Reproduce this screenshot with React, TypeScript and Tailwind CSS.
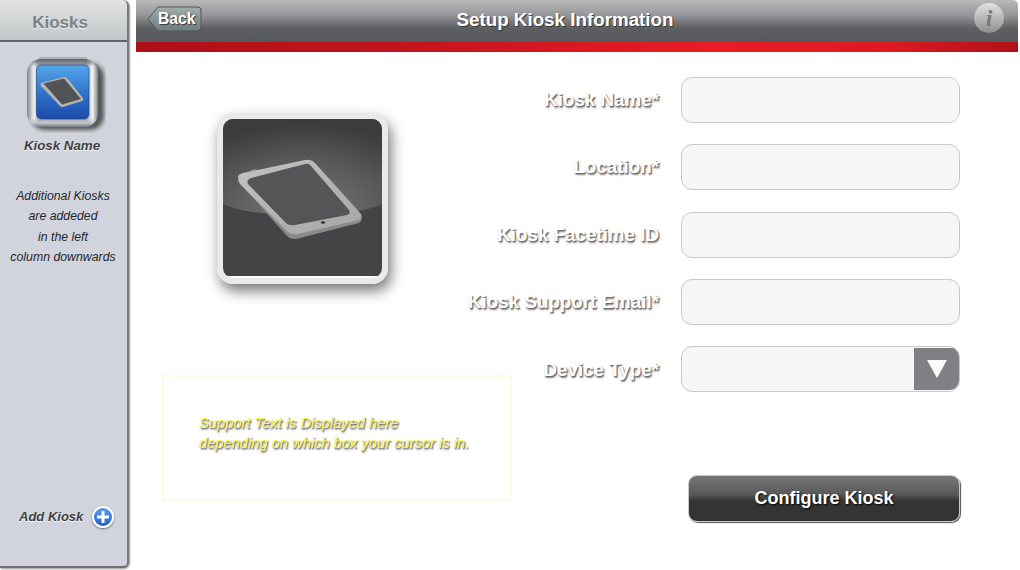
const labelShadow = "text-white [text-shadow:1px_1px_1px_#666,1px_2px_2px_#888]";

function SmallKioskIcon() {
  return (
    <svg width="80" height="76" viewBox="0 0 80 76" className="block">
      <defs>
        <linearGradient id="fr" x1="0" x2="1" y1="0" y2="0">
          <stop offset="0" stopColor="#7d8388" />
          <stop offset="0.1" stopColor="#f2f4f5" />
          <stop offset="0.16" stopColor="#9aa0a5" />
          <stop offset="0.84" stopColor="#9aa0a5" />
          <stop offset="0.92" stopColor="#f6f7f8" />
          <stop offset="1" stopColor="#7d8388" />
        </linearGradient>
        <linearGradient id="frv" x1="0" x2="0" y1="0" y2="1">
          <stop offset="0" stopColor="#5d6368" />
          <stop offset="0.12" stopColor="#868c91" stopOpacity="0" />
          <stop offset="0.86" stopColor="#c4c8cb" stopOpacity="0" />
          <stop offset="0.94" stopColor="#c4c8cb" />
          <stop offset="1" stopColor="#70767b" />
        </linearGradient>
        <linearGradient id="bl" x1="0" x2="0" y1="0" y2="1">
          <stop offset="0" stopColor="#55a6ea" />
          <stop offset="0.5" stopColor="#3176cc" />
          <stop offset="1" stopColor="#1c4aa8" />
        </linearGradient>
        <filter id="sh" x="-20%" y="-20%" width="140%" height="140%">
          <feGaussianBlur stdDeviation="2" />
        </filter>
      </defs>
      <rect x="5" y="6" width="73" height="67" rx="14" fill="#222" opacity="0.7" filter="url(#sh)" />
      <rect x="13" y="0" width="48" height="3" fill="#aeb1b6" />
      <rect x="1" y="2" width="71" height="68" rx="14" fill="url(#fr)" />
      <rect x="1" y="2" width="71" height="68" rx="14" fill="url(#frv)" />
      <rect x="10.500" y="8" width="52.500" height="54" rx="5" fill="url(#bl)" stroke="#1b3f8f" strokeWidth="0.6" />
      <path d="M15 26 L38 20 Q40 19.500 41 21 L57 41 Q58 43 56 44 L37 50 Q35 50.500 34 49 L15 29 Q14 27 15 26 Z" fill="#b5b5b0" />
      <path d="M17.500 26.500 L38 21.500 L55 42 L36 47.500 Z" fill="#515256" />
    </svg>
  );
}

function LargeKioskIcon() {
  return (
    <svg width="159" height="157" viewBox="0 0 159 157" className="block">
      <defs>
        <radialGradient id="gl" cx="0.5" cy="0.95" r="0.9">
          <stop offset="0" stopColor="#7a7a7a" />
          <stop offset="0.6" stopColor="#585858" />
          <stop offset="1" stopColor="#3c3c3c" />
        </radialGradient>
        <linearGradient id="td" x1="0" x2="1" y1="0" y2="1">
          <stop offset="0" stopColor="#c2c2c2" />
          <stop offset="1" stopColor="#a6a6a6" />
        </linearGradient>
      </defs>
      <rect width="159" height="157" fill="#444345" />
      <path d="M0 0 H159 V85 C130 100 30 100 0 85 Z" fill="url(#gl)" />
      <path d="M15 62 L65 118 Q69 121 75 119.500 L136 104 Q140 102 138 97 L90 60 L30 50 Z" fill="#8a8a8a" />
      <path d="M15 58 Q15 55 20 54 L82 41 Q88 40 92 44 L138 95 Q140 99 136 101 L75 115 Q69 116 65 113 L17 65 Q15 62 15 58 Z" fill="url(#td)" />
      <path d="M28 59 L82 45 Q86 44 88 47 L126 91 Q128 95 124 96 L72 106 Q66 107 63 104 L25 65 Q23 61 28 59 Z" fill="#555557" />
      <ellipse cx="100" cy="103.500" rx="2" ry="1.300" fill="#2c2c2c" />
    </svg>
  );
}

function Field({ label, select }: { label: string; select?: boolean }) {
  return (
    <div className="flex items-center h-[46px]">
      <div className={`w-[237px] text-right text-[18.800px] leading-[22px] font-bold ${select ? "translate-y-[1px]" : ""} ${labelShadow}`}>{label}</div>
      <div className="ml-[22px] w-[279px] h-[46px] rounded-[11px] border border-[#c9c9c9] bg-[#f6f6f6] flex justify-end overflow-hidden">
        {select && (
          <div className="w-[45px] h-[42px] mt-[1px] bg-[#7f8083] rounded-br-[9px] flex items-center justify-center">
            <svg width="22" height="20" viewBox="0 0 22 20"><path d="M1 1 H21 L11 19 Z" fill="#fafafa" /></svg>
          </div>
        )}
      </div>
    </div>
  );
}

export default function App() {
  return (
    <div className="flex w-[1020px] h-[570px] bg-white overflow-hidden font-['Liberation_Sans',Arial,sans-serif]">
      <aside className="w-[129px] h-[568px] shrink-0 flex flex-col bg-[#d1d4dc] rounded-r-[6px] border-r-2 border-b-2 border-r-[#77797d] border-b-[#6e7074] shadow-[1px_1px_2px_#999]">
        <div className="h-[42px] shrink-0 flex items-center justify-center border-b-2 border-[#62666a] rounded-tr-[6px] pt-[5px] pr-[7px] bg-[linear-gradient(#e1e3e3,#c3c7c9)]">
          <span className="text-[17px] font-bold text-[#7a7f89] [text-shadow:0_1px_0_#eee]">Kiosks</span>
        </div>
        <div className="pl-[26px] pt-[15px]">
          <SmallKioskIcon />
        </div>
        <div className="mt-[5px] pr-[3px] text-center text-[13.300px] leading-[16px] font-bold italic text-[#3f3f42] [text-shadow:0_1px_1px_#fff]">Kiosk Name</div>
        <div className="mt-[32px] pr-[1px] text-center text-[12.300px] leading-[20.300px] italic text-[#26272a]">
          <div>Additional Kiosks</div>
          <div>are addeded</div>
          <div>in the left</div>
          <div>column downwards</div>
        </div>
        <div className="mt-auto mb-[38px] pl-[19px] flex items-center gap-[9px]">
          <span className="text-[13px] font-bold italic text-[#3f3f42] [text-shadow:0_1px_1px_#fff]">Add Kiosk</span>
          <span className="w-[22px] h-[22px] rounded-full border-2 border-white bg-[linear-gradient(#5a9cf0,#1f5fc8)] shadow-[0_1px_2px_#666] flex items-center justify-center">
            <svg width="14" height="14" viewBox="0 0 14 14"><path d="M5.500 1 H8.500 V5.500 H13 V8.500 H8.500 V13 H5.500 V8.500 H1 V5.500 H5.500 Z" fill="#fff" /></svg>
          </span>
        </div>
      </aside>

      <main className="ml-[7px] w-[882px] flex flex-col">
        <header className="h-[42px] shrink-0 flex items-center justify-between rounded-tr-[5px] bg-[linear-gradient(#b9b9ba_0%,#96979a_35%,#5d5e62_68%,#58595c_100%)] pl-[11px] pr-[14px]">
          <div className="flex items-center mb-[5px]">
            <svg width="55" height="26" viewBox="0 0 55 26" className="block">
              <defs>
                <linearGradient id="bk" x1="0" x2="0" y1="0" y2="1">
                  <stop offset="0" stopColor="#a2aeae" />
                  <stop offset="1" stopColor="#6f7c7c" />
                </linearGradient>
              </defs>
              <path d="M1 13 L11 1 H51 Q54 1 54 4 V22 Q54 25 51 25 H11 Z" fill="url(#bk)" stroke="#4f5656" strokeWidth="1" />
            </svg>
            <span className="-ml-[44px] w-[40px] text-[15.700px] leading-[20px] font-bold text-white [text-shadow:1px_1px_1px_#333]">Back</span>
          </div>
          <h1 className="absolute left-[136px] w-[858px] text-center text-[18.800px] leading-[22px] font-bold text-white mb-[2px] [text-shadow:1px_1px_1px_#333] pointer-events-none">Setup Kiosk Information</h1>
          <div className="w-[30px] h-[30px] mb-[6px] rounded-full bg-[linear-gradient(#e2e2e2,#8e8e8e)] flex items-center justify-center">
            <span className="font-['Liberation_Serif',serif] text-[24px] leading-none font-bold italic text-[#77787b]">i</span>
          </div>
        </header>
        <div className="h-[10px] shrink-0 bg-[linear-gradient(90deg,#ad0f17_0%,#c3141c_30%,#e91c25_65%,#de1a22_85%,#b01017_100%)]" />

        <div className="flex-1 flex">
          <div className="w-[396px] shrink-0 pl-[26px]">
            <div className="ml-[55px] mt-[61px] w-[171px] h-[171px] rounded-[16px] border-[6px] border-[#e9e9e9] shadow-[3px_7px_14px_#777] overflow-hidden">
              <LargeKioskIcon />
            </div>
            <div className="mt-[91px] h-[126px] w-[350px] border-2 border-[#fbfbe2] pl-[35px] pt-[36px] text-[14.700px] leading-[20px] italic text-[#f8f65a] [text-shadow:1px_1px_1px_#777,1px_2px_2px_#999]">
              <div>Support Text is Displayed here</div>
              <div>depending on which box your cursor is in.</div>
            </div>
          </div>
          <div className="pt-[25.200px] -ml-[110px] w-[560px] relative">
            <div className="flex flex-col gap-[21.200px]">
              <Field label="Kiosk Name*" />
              <Field label="Location*" />
              <Field label="Kiosk Facetime ID" />
              <Field label="Kiosk Support Email*" />
              <Field label="Device Type*" select />
            </div>
            <div className="mt-[83px] ml-[266px] w-[272px] h-[47px] rounded-[9px] border border-[#c8c8c8] bg-[linear-gradient(#757575_0%,#5a5a5a_40%,#353535_55%,#333333_100%)] shadow-[1px_1px_1px_#555] flex items-center justify-center">
              <span className="text-[18px] font-bold text-white [text-shadow:1px_1px_2px_#000]">Configure Kiosk</span>
            </div>
          </div>
        </div>
      </main>
    </div>
  );
}
